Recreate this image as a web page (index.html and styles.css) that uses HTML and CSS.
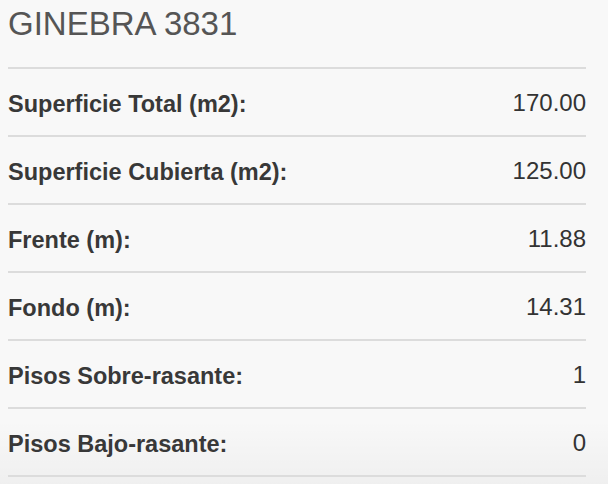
FILE: index.html
```html
<!DOCTYPE html>
<html>
<head>
<meta charset="utf-8">
<link rel="stylesheet" href="styles.css">
</head>
<body>
<div class="page">
  <h1 class="title">GINEBRA 3831</h1>
  <ul class="specs">
    <li class="row"><span class="label">Superficie Total (m2):</span><span class="value">170.00</span></li>
    <li class="row"><span class="label">Superficie Cubierta (m2):</span><span class="value">125.00</span></li>
    <li class="row"><span class="label">Frente (m):</span><span class="value">11.88</span></li>
    <li class="row"><span class="label">Fondo (m):</span><span class="value">14.31</span></li>
    <li class="row"><span class="label">Pisos Sobre-rasante:</span><span class="value">1</span></li>
    <li class="row"><span class="label">Pisos Bajo-rasante:</span><span class="value">0</span></li>
  </ul>
</div>
</body>
</html>
```
FILE: styles.css
```css
html, body {
  margin: 0;
  padding: 0;
  height: 100%;
}
html {
  background: #f8f8f8;
}
body {
  font-family: "Liberation Sans", Arial, sans-serif;
  overflow: hidden;
  background: linear-gradient(to bottom, rgba(0,0,0,0) 0, rgba(0,0,0,0) 420px, rgba(0,0,0,0.035) 484px);
}
.page {
  padding: 0 22px 0 8px;
}
.title {
  margin: 0;
  height: 67px;
  box-sizing: border-box;
  padding-top: 6px;
  font-size: 33px;
  font-weight: normal;
  color: #555;
  line-height: 36px;
}
.specs {
  list-style: none;
  margin: 0;
  padding: 0;
  border-top: 2px solid #dcdcdc;
}
.row {
  display: flex;
  justify-content: space-between;
  align-items: center;
  height: 66px;
  border-bottom: 2px solid #dcdcdc;
  color: #333;
}
.label {
  font-weight: bold;
  font-size: 23.5px;
  color: #383838;
  padding-top: 4px;
}
.value {
  font-size: 24px;
  padding-top: 1px;
}
```
